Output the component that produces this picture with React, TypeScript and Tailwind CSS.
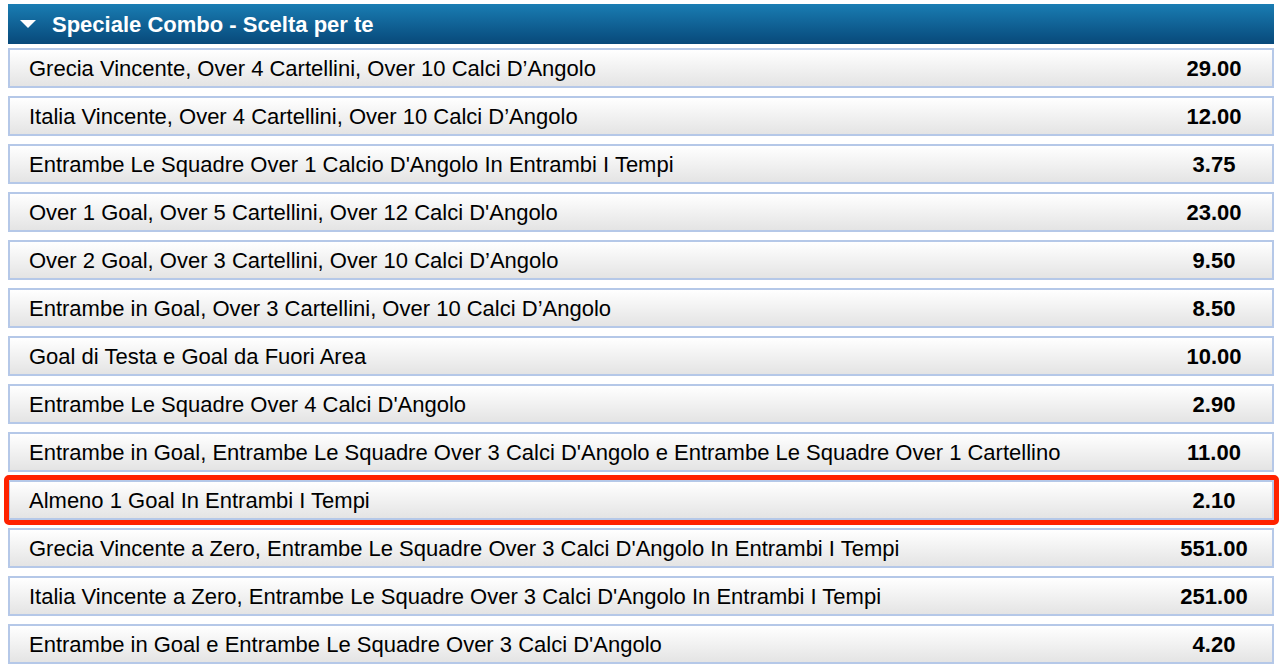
import React from "react";

type Row = { label: string; odds: string; highlight?: boolean };

const rows: Row[] = [
  { label: "Grecia Vincente, Over 4 Cartellini, Over 10 Calci D\u2019Angolo", odds: "29.00" },
  { label: "Italia Vincente, Over 4 Cartellini, Over 10 Calci D\u2019Angolo", odds: "12.00" },
  { label: "Entrambe Le Squadre Over 1 Calcio D'Angolo In Entrambi I Tempi", odds: "3.75" },
  { label: "Over 1 Goal, Over 5 Cartellini, Over 12 Calci D'Angolo", odds: "23.00" },
  { label: "Over 2 Goal, Over 3 Cartellini, Over 10 Calci D\u2019Angolo", odds: "9.50" },
  { label: "Entrambe in Goal, Over 3 Cartellini, Over 10 Calci D\u2019Angolo", odds: "8.50" },
  { label: "Goal di Testa e Goal da Fuori Area", odds: "10.00" },
  { label: "Entrambe Le Squadre Over 4 Calci D'Angolo", odds: "2.90" },
  {
    label:
      "Entrambe in Goal, Entrambe Le Squadre Over 3 Calci D'Angolo e Entrambe Le Squadre Over 1 Cartellino",
    odds: "11.00",
  },
  { label: "Almeno 1 Goal In Entrambi I Tempi", odds: "2.10", highlight: true },
  {
    label: "Grecia Vincente a Zero, Entrambe Le Squadre Over 3 Calci D'Angolo In Entrambi I Tempi",
    odds: "551.00",
  },
  {
    label: "Italia Vincente a Zero, Entrambe Le Squadre Over 3 Calci D'Angolo In Entrambi I Tempi",
    odds: "251.00",
  },
  { label: "Entrambe in Goal e Entrambe Le Squadre Over 3 Calci D'Angolo", odds: "4.20" },
];

function OddsRow({ row }: { row: Row }) {
  return (
    <div className="relative">
      <div className="flex h-[40px] items-center border-2 border-[#b5c8e8] bg-gradient-to-b from-white to-[#e4e4e4]">
        <span className="flex-1 whitespace-nowrap pl-[19px] text-[22px] text-black">{row.label}</span>
        <span className="w-[116px] text-center text-[22px] font-bold text-black">{row.odds}</span>
      </div>
      {/* red annotation box */}
      {row.highlight && (
        <div className="pointer-events-none absolute -top-[5px] -bottom-[5px] -left-[4px] -right-[5px] rounded-[5px] border-[5px] border-[#ff2200]" />
      )}
    </div>
  );
}

export default function App() {
  return (
    <div
      className="h-[672px] overflow-hidden bg-white px-2 pt-1"
      style={{ fontFamily: '"Liberation Sans", Arial, sans-serif' }}
    >
      {/* ── Header ───────────────────────────── */}
      <div className="flex h-[40px] items-center bg-gradient-to-b from-[#1a7db3] to-[#08497a] pl-3">
        <svg width="16" height="8" viewBox="0 0 16 8" className="mr-[16px]">
          <polygon points="0,0 16,0 8,8" fill="#ffffff" />
        </svg>
        <span className="text-[22px] font-bold text-white">Speciale Combo - Scelta per te</span>
      </div>

      {/* ── Rows ─────────────────────────────── */}
      <div className="mt-1 flex flex-col gap-2">
        {rows.map((r) => (
          <OddsRow key={r.label} row={r} />
        ))}
        <div className="h-[40px] border-2 border-[#e4f2fa] bg-[#f2fbfd]" />
      </div>
    </div>
  );
}
